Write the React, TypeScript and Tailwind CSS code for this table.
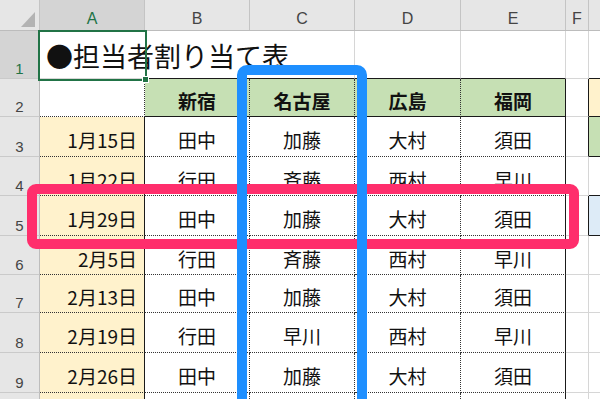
import type { ReactNode } from 'react'

type Line = 'g' | 'd' | 's' | 'n'

const RB: Record<Line, string> = {
  g: 'border-r border-r-[#d6d6d6]',
  d: 'border-r border-r-[#333] [border-right-style:dotted]',
  s: 'border-r border-r-[#1a1a1a]',
  n: '',
}
const BB: Record<Line, string> = {
  g: 'border-b border-b-[#d6d6d6]',
  d: 'border-b border-b-[#333] [border-bottom-style:dotted]',
  s: 'border-b border-b-[#1a1a1a]',
  n: '',
}

const widths = ['w-[105px]', 'w-[105px]', 'w-[105px]', 'w-[106px]', 'w-[105px]', 'w-[23px]', 'flex-1']
const letters = ['A', 'B', 'C', 'D', 'E', 'F', '']

type CellSpec = {
  text?: ReactNode
  bg?: string
  r: Line
  b: Line
  kind?: 'date' | 'name' | 'head' | 'title'
}

const kindClass = {
  date: 'justify-end pr-[7px] pt-[6px] text-[19px]',
  name: 'justify-center pt-[6px] text-[19px]',
  head: 'justify-center pt-[6px] text-[19px] font-bold',
  title: 'justify-start pl-[6px] pt-[1px] text-[27px] whitespace-nowrap overflow-visible',
}

const dates = ['1月15日', '1月22日', '1月29日', '2月5日', '2月13日', '2月19日', '2月26日']
const colB = ['田中', '行田', '田中', '行田', '田中', '行田', '田中']
const colC = ['加藤', '斉藤', '加藤', '斉藤', '加藤', '早川', '加藤']
const colD = ['大村', '西村', '大村', '西村', '大村', '西村', '大村']
const colE = ['須田', '早川', '須田', '早川', '須田', '早川', '須田']
const heights = ['h-[40px]', 'h-[39px]', 'h-[40px]', 'h-[39px]', 'h-[38px]', 'h-[40px]', 'h-[40px]']

// legend swatches in column G, rows 2..5
const legend: Record<number, string> = { 2: 'bg-[#fff2cc]', 3: 'bg-[#c6e0b4]', 5: 'bg-[#ddebf7]' }

function Row({ num, h, cells, active }: { num?: number; h: string; cells: CellSpec[]; active?: boolean }) {
  return (
    <div className={`flex ${h}`}>
      <div
        className={`flex w-[40px] shrink-0 items-end justify-center border-r border-b border-r-[#bdbdbd] border-b-[#cacaca] pb-[2px] font-['Liberation_Sans',sans-serif] text-[15px] leading-none ${
          active ? 'bg-[#d4d4d4] text-[#217346]' : 'bg-[#e6e6e6] text-[#444]'
        }`}
      >
        {num}
      </div>
      {cells.map((c, i) => (
        <div
          key={i}
          className={`flex shrink-0 items-center leading-none text-[#111] ${widths[i]} ${c.bg ?? ''} ${RB[c.r]} ${BB[c.b]} ${
            kindClass[c.kind ?? 'name']
          }`}
        >
          {c.text}
        </div>
      ))}
    </div>
  )
}

export default function App() {
  const row1: CellSpec[] = [
    { text: '●担当者割り当て表', r: 'n', b: 'g', kind: 'title' },
    { r: 'n', b: 's' },
    { r: 'g', b: 's' },
    { r: 'g', b: 's' },
    { r: 'g', b: 's' },
    { r: 'g', b: 'g' },
    { r: 'n', b: 's' },
  ]
  const row2: CellSpec[] = [
    { r: 'd', b: 'd' },
    { text: '新宿', bg: 'bg-[#c6e0b4]', r: 'd', b: 's', kind: 'head' },
    { text: '名古屋', bg: 'bg-[#c6e0b4]', r: 'd', b: 's', kind: 'head' },
    { text: '広島', bg: 'bg-[#c6e0b4]', r: 'd', b: 's', kind: 'head' },
    { text: '福岡', bg: 'bg-[#c6e0b4]', r: 's', b: 's', kind: 'head' },
    { r: 's', b: 'g' },
    { bg: legend[2], r: 'n', b: 's' },
  ]

  const dataRows = dates.map((d, i): CellSpec[] => {
    const n = i + 3
    const fr: Line = legend[n] ? 's' : 'g'
    const gb: Line = n <= 5 ? 's' : 'g'
    return [
      { text: d, bg: 'bg-[#fff2cc]', r: 's', b: 'd', kind: 'date' },
      { text: colB[i], r: 'd', b: 'd' },
      { text: colC[i], r: 'd', b: 'd' },
      { text: colD[i], r: 'd', b: 'd' },
      { text: colE[i], r: 's', b: 'd' },
      { r: fr, b: 'g' },
      { bg: legend[n], r: 'n', b: gb },
    ]
  })

  // row 10 only peeks in at the bottom edge
  const row10: CellSpec[] = [
    { bg: 'bg-[#fff2cc]', r: 's', b: 'd' },
    { r: 'd', b: 'd' },
    { r: 'd', b: 'd' },
    { r: 'd', b: 'd' },
    { r: 's', b: 'd' },
    { r: 'g', b: 'g' },
    { r: 'n', b: 'g' },
  ]

  return (
    <div className="relative h-[399px] w-[600px] overflow-hidden bg-white font-['Noto_Sans_CJK_JP',sans-serif]">
      {/* column headers */}
      <div className="flex h-[31px] border-b border-b-[#bcbcbc] bg-[#e6e6e6] font-['Liberation_Sans',sans-serif] text-[16px] leading-none text-[#444]">
        <div className="relative w-[40px] shrink-0 border-r border-r-[#c4c4c4]">
          <svg className="absolute left-[21px] top-[12px]" width="15" height="16" viewBox="0 0 15 16">
            <polygon points="14,0 14,15 0,15" fill="#b3b3b3" />
          </svg>
        </div>
        {letters.map((l, i) => (
          <div
            key={i}
            className={`flex shrink-0 items-end justify-center pb-[3px] ${widths[i]} ${
              i < 6 ? 'border-r border-r-[#c4c4c4]' : ''
            } ${i === 0 ? 'bg-[#d4d4d4] text-[#217346]' : ''}`}
          >
            {l}
          </div>
        ))}
      </div>

      <Row num={1} h="h-[48px]" cells={row1} active />
      <Row num={2} h="h-[38px]" cells={row2} />
      {dataRows.map((cells, i) => (
        <Row key={i} num={i + 3} h={heights[i]} cells={cells} />
      ))}
      <Row h="h-[40px]" cells={row10} />

      {/* A1 selection */}
      <div className="absolute left-[38px] top-[30px] h-[51px] w-[109px] border-2 border-[#217346]" />
      <div className="absolute left-[142px] top-[76px] h-[7px] w-[7px] border border-white bg-[#217346]" />

      {/* highlights */}
      <div className="absolute left-[27px] top-[184px] h-[65px] w-[552px] rounded-[9px] border-[10px] border-[#ff2e6c]" />
      <div className="absolute left-[237px] top-[65px] h-[360px] w-[130px] rounded-[10px] border-[10px] border-[#1e8fff]" />
    </div>
  )
}
